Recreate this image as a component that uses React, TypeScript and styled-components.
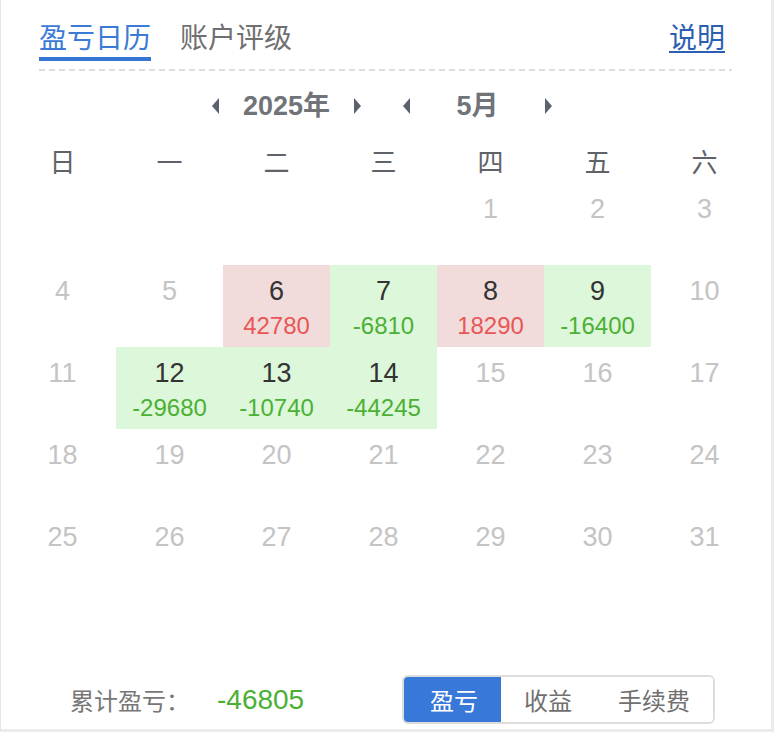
import React, { useState } from "react";
import styled, { createGlobalStyle } from "styled-components";

const Global = createGlobalStyle`
  html, body { margin: 0; padding: 0; background: #fff; }
  body { font-family: "Noto Sans CJK SC", "Liberation Sans", sans-serif; }
  * { box-sizing: border-box; }
`;

const Card = styled.div`
  width: 774px;
  height: 732px;
  display: flex;
  flex-direction: column;
  background: #fff;
  border-left: 1px solid #e6e6e6;
  border-right: 3px solid #ebebeb;
  border-bottom: 3px solid #ebebeb;
`;

const Header = styled.div`
  position: relative;
  display: flex;
  align-items: flex-end;
  margin: 0 39px 0 38px;
  padding-top: 16px;
  padding-bottom: 9px;
  &::after {
    content: "";
    position: absolute;
    left: 0;
    right: 0;
    bottom: -1px;
    height: 2px;
    background: repeating-linear-gradient(
      to right,
      #dedede 0 6px,
      transparent 6px 10px
    );
  }
`;

const Tab = styled.div<{ $active?: boolean }>`
  font-size: 28px;
  line-height: 40px;
  padding-bottom: 1px;
  margin-right: 29px;
  color: ${(p) => (p.$active ? "#3b7bd6" : "#707070")};
  border-bottom: 4px solid ${(p) => (p.$active ? "#3575d6" : "transparent")};
  cursor: pointer;
`;

const HelpLink = styled.a`
  margin-left: auto;
  margin-right: 7px;
  font-size: 28px;
  line-height: 40px;
  padding-bottom: 5px;
  color: #2c5fb2;
  text-decoration: underline;
  text-underline-offset: 3px;
  cursor: pointer;
`;

const Nav = styled.div`
  display: flex;
  justify-content: center;
  gap: 42px;
  margin: 16px 16px 0 8px;
  height: 40px;
`;

const NavGroup = styled.div`
  display: flex;
  align-items: center;
`;

const Arrow = styled.span<{ $dir: "left" | "right" }>`
  width: 0;
  height: 0;
  border-top: 8px solid transparent;
  border-bottom: 8px solid transparent;
  ${(p) =>
    p.$dir === "left"
      ? "border-right: 7px solid #5a626e;"
      : "border-left: 7px solid #5a626e;"}
  cursor: pointer;
`;

const NavLabel = styled.span`
  width: 135px;
  text-align: center;
  font-family: "Liberation Sans", "Noto Sans CJK SC", sans-serif;
  font-weight: bold;
  font-size: 27px;
  line-height: 40px;
  color: #707378;
`;

const Weekdays = styled.div`
  display: grid;
  grid-template-columns: repeat(7, 107px);
  margin: 15px 16px 0 8px;
`;

const Weekday = styled.div`
  text-align: center;
  font-size: 26px;
  line-height: 40px;
  color: #5f6368;
`;

const Weeks = styled.div`
  display: grid;
  grid-template-columns: repeat(7, 107px);
  grid-auto-rows: 82px;
  margin: 2px 16px 0 8px;
`;

type Tone = "none" | "profit" | "loss";

const Cell = styled.div<{ $tone: Tone }>`
  display: flex;
  flex-direction: column;
  align-items: center;
  padding-top: 10px;
  font-family: "Liberation Sans", Arial, sans-serif;
  background: ${(p) =>
    p.$tone === "profit" ? "#f2dbdb" : p.$tone === "loss" ? "#ddf7da" : "transparent"};
`;

const DayNum = styled.div<{ $active: boolean }>`
  font-size: 27px;
  line-height: 32px;
  color: ${(p) => (p.$active ? "#333333" : "#c4c4c4")};
`;

const Amount = styled.div<{ $tone: Tone }>`
  margin-top: 4px;
  font-size: 24px;
  line-height: 30px;
  color: ${(p) => (p.$tone === "profit" ? "#e85656" : "#4cb034")};
`;

const Footer = styled.div`
  margin-top: auto;
  display: flex;
  align-items: center;
  padding: 0 56px 5px 69px;
`;

const TotalLabel = styled.span`
  font-size: 24px;
  color: #777;
`;

const TotalValue = styled.span<{ $tone: Tone }>`
  margin-left: 27px;
  font-family: "Liberation Sans", Arial, sans-serif;
  font-size: 28px;
  color: ${(p) => (p.$tone === "profit" ? "#e85656" : "#4cb034")};
`;

const Segment = styled.div`
  margin-left: auto;
  display: flex;
  height: 49px;
  border: 2px solid #dddddd;
  border-radius: 6px;
  overflow: hidden;
`;

const SegButton = styled.button<{ $active?: boolean }>`
  border: none;
  margin: ${(p) => (p.$active ? "-2px 0 -2px -2px" : "0")};
  padding: 0 23px 0 ${(p) => (p.$active ? "28px" : "23px")};
  font-family: "Noto Sans CJK SC", sans-serif;
  font-size: 24px;
  background: ${(p) => (p.$active ? "#3878d8" : "#fff")};
  color: ${(p) => (p.$active ? "#fff" : "#707070")};
  cursor: pointer;
`;

const pnl: Record<number, number> = {
  6: 42780,
  7: -6810,
  8: 18290,
  9: -16400,
  12: -29680,
  13: -10740,
  14: -44245,
};

const weekdays = ["日", "一", "二", "三", "四", "五", "六"];

export default function App() {
  const [mode, setMode] = useState("盈亏");
  const year = 2025;
  const month = 5;
  const firstDay = new Date(year, month - 1, 1).getDay();
  const daysInMonth = new Date(year, month, 0).getDate();
  const total = Object.values(pnl).reduce((a, b) => a + b, 0);

  const cells: React.ReactNode[] = [];
  for (let i = 0; i < firstDay; i++) cells.push(<Cell key={`e${i}`} $tone="none" />);
  for (let d = 1; d <= daysInMonth; d++) {
    const v = pnl[d];
    const tone: Tone = v === undefined ? "none" : v >= 0 ? "profit" : "loss";
    cells.push(
      <Cell key={d} $tone={tone}>
        <DayNum $active={v !== undefined}>{d}</DayNum>
        {v !== undefined && <Amount $tone={tone}>{v}</Amount>}
      </Cell>
    );
  }

  return (
    <>
      <Global />
      <Card>
        <Header>
          <Tab $active>盈亏日历</Tab>
          <Tab>账户评级</Tab>
          <HelpLink>说明</HelpLink>
        </Header>
        <Nav>
          <NavGroup>
            <Arrow $dir="left" />
            <NavLabel>{year}年</NavLabel>
            <Arrow $dir="right" />
          </NavGroup>
          <NavGroup>
            <Arrow $dir="left" />
            <NavLabel>{month}月</NavLabel>
            <Arrow $dir="right" />
          </NavGroup>
        </Nav>
        <Weekdays>
          {weekdays.map((w) => (
            <Weekday key={w}>{w}</Weekday>
          ))}
        </Weekdays>
        <Weeks>{cells}</Weeks>
        <Footer>
          <TotalLabel>累计盈亏：</TotalLabel>
          <TotalValue $tone={total >= 0 ? "profit" : "loss"}>{total}</TotalValue>
          <Segment>
            {["盈亏", "收益", "手续费"].map((m) => (
              <SegButton key={m} $active={mode === m} onClick={() => setMode(m)}>
                {m}
              </SegButton>
            ))}
          </Segment>
        </Footer>
      </Card>
    </>
  );
}
